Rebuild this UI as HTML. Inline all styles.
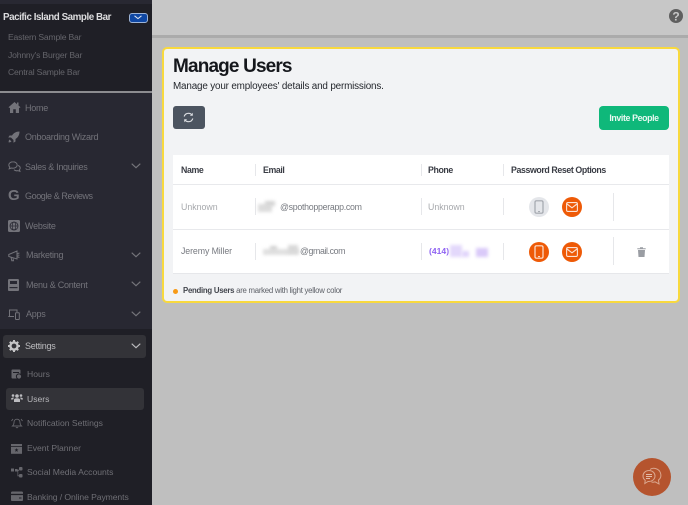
<!DOCTYPE html>
<html>
<head>
<meta charset="utf-8">
<style>
html,body{margin:0;padding:0;width:688px;height:505px;overflow:hidden;background:#bfbfbf;font-family:"Liberation Sans",sans-serif;}
#wrap{position:absolute;left:0;top:0;width:688px;height:505px;overflow:hidden;background:#bfbfbf;filter:blur(.3px);}
.a{position:absolute;white-space:nowrap;}
#side{position:absolute;left:0;top:0;width:152px;height:505px;background:#282832;overflow:hidden;}
.m{position:absolute;font-size:9px;color:#73737a;white-space:nowrap;line-height:12px;letter-spacing:-.25px;}
.s{position:absolute;font-size:8.6px;color:#6f6f75;white-space:nowrap;line-height:12px;}
svg{position:absolute;overflow:visible;}
.div{position:absolute;width:1px;background:#e6e7ea;}
.th{position:absolute;font-size:8.8px;font-weight:bold;color:#3a3d45;white-space:nowrap;line-height:12px;letter-spacing:-.4px;}
.td{position:absolute;font-size:8.8px;color:#777a80;white-space:nowrap;line-height:12px;}
.c{position:absolute;width:20px;height:20px;border-radius:50%;background:#ee5a07;}
.blur{position:absolute;filter:blur(1.5px);}
</style>
</head>
<body>
<div id="wrap">
<!-- top bar -->
<div class="a" style="left:152px;top:0;width:536px;height:35px;background:#c7c7c7;"></div>
<div class="a" style="left:152px;top:35px;width:536px;height:3px;background:#ababab;"></div>
<svg style="left:669px;top:9px" width="14" height="14" viewBox="0 0 14 14"><circle cx="7" cy="7" r="7" fill="#5f5f5f"/><text x="7" y="11.300" text-anchor="middle" font-size="12" font-weight="bold" fill="#c7c7c7" font-family="Liberation Sans">?</text></svg>

<!-- sidebar -->
<div id="side">
  <div class="a" style="left:0;top:4px;width:152px;height:87px;background:#1f1f26;"></div>
  <div class="a" style="left:0;top:91px;width:152px;height:2px;background:#8c8c90;"></div>
  <div class="a" style="left:3px;top:12px;font-size:9.800px;font-weight:bold;color:#dcdcde;line-height:12px;letter-spacing:-.45px;">Pacific Island Sample Bar</div>
  <div class="a" style="left:129px;top:13px;width:17px;height:8px;border:1px solid #9db4d8;border-radius:3px;background:#0f47a3;"></div>
  <svg style="left:133px;top:15px" width="10" height="5" viewBox="0 0 10 5"><path d="M1.500 .8 5 3.600 8.500 .8" fill="none" stroke="#dfe6f2" stroke-width="1"/></svg>
  <div class="s" style="left:8px;top:31px;color:#65656b;letter-spacing:-.2px;">Eastern Sample Bar</div>
  <div class="s" style="left:8px;top:49px;color:#65656b;letter-spacing:-.18px;">Johnny's Burger Bar</div>
  <div class="s" style="left:8px;top:66px;color:#65656b;letter-spacing:-.18px;">Central Sample Bar</div>

  <!-- home -->
  <svg style="left:8px;top:101px" width="13" height="12" viewBox="0 0 13 12"><path d="M6.500 1 .5 6.300 1.500 7 2 6.600V12H5.200V8.200H7.800V12H11V6.600L11.500 7 12.500 6.300 10.500 4.500V1.500H9V3.200Z" fill="#73737a"/></svg>
  <div class="m" style="left:25px;top:102px;">Home</div>
  <!-- rocket -->
  <svg style="left:8px;top:131px" width="12" height="12" viewBox="0 0 12 12"><path d="M11.500 .5C8 .5 5.500 2 4 4.500H1.500L.3 6.500H3L5.500 9V11.700L7.500 10.500V8C10 6.500 11.500 4 11.500 .5ZM1.500 8.500C.8 9.300.6 10.500.6 11.400 1.500 11.400 2.700 11.200 3.500 10.500Z" fill="#73737a"/></svg>
  <div class="m" style="left:25px;top:131px;">Onboarding Wizard</div>
  <!-- sales -->
  <svg style="left:8px;top:161px" width="13" height="11" viewBox="0 0 13 11"><path d="M5 .8C2.600 .8.8 2.200.8 4 .8 4.800 1.200 5.600 1.800 6.100L1.200 7.800 3.400 7C3.900 7.100 4.500 7.200 5 7.200 7.400 7.200 9.200 5.800 9.200 4S7.400 .8 5 .8ZM10 4.500C11.300 4.900 12.200 5.900 12.200 7 12.200 7.700 11.900 8.300 11.400 8.800L11.900 10.300 10 9.600C8.600 10 7 9.700 6 8.800" fill="none" stroke="#73737a" stroke-width="1"/></svg>
  <div class="m" style="left:25px;top:161px;letter-spacing:-.3px;">Sales &amp; Inquiries</div>
  <!-- google -->
  <div class="a" style="left:8px;top:188px;font-size:15px;font-weight:bold;color:#73737a;line-height:16px;">G</div>
  <div class="m" style="left:25px;top:190px;letter-spacing:-.4px;">Google &amp; Reviews</div>
  <!-- website -->
  <svg style="left:8px;top:220px" width="12" height="12" viewBox="0 0 12 12"><rect width="12" height="12" rx="1.500" fill="#73737a"/><circle cx="6" cy="6" r="4" fill="none" stroke="#282832" stroke-width=".8"/><ellipse cx="6" cy="6" rx="1.800" ry="4" fill="none" stroke="#282832" stroke-width=".7"/><path d="M2 6H10" stroke="#282832" stroke-width=".7"/></svg>
  <div class="m" style="left:25px;top:220px;">Website</div>
  <!-- marketing -->
  <svg style="left:8px;top:250px" width="12" height="12" viewBox="0 0 12 12"><path d="M.8 4.500 9 1V9L.8 6.500ZM3 7 3.800 10.800H5.500L4.800 7.600M9 3.800 11.400 3M9 5 11.400 5.300M9 6.500 11.400 7.500" fill="none" stroke="#73737a" stroke-width="1"/></svg>
  <div class="m" style="left:26px;top:249px;">Marketing</div>
  <!-- menu -->
  <svg style="left:8px;top:279px" width="11" height="12" viewBox="0 0 11 12"><rect width="11" height="12" rx="1.300" fill="#73737a"/><rect x="2" y="2" width="7" height="3" fill="#282832"/><rect x="1.500" y="8" width="8" height="1.200" fill="#282832"/></svg>
  <div class="m" style="left:26px;top:279px;">Menu &amp; Content</div>
  <!-- apps -->
  <svg style="left:8px;top:309px" width="12" height="11" viewBox="0 0 12 11"><path d="M1.500 7.500V1H9V3M.3 7.500H6" fill="none" stroke="#73737a" stroke-width="1"/><rect x="7.500" y="3.800" width="3.800" height="6.700" rx=".6" fill="none" stroke="#73737a" stroke-width="1"/></svg>
  <div class="m" style="left:26px;top:308px;">Apps</div>

  <!-- chevrons -->
  <svg style="left:131px;top:163px" width="10" height="6" viewBox="0 0 10 6"><path d="M.7 .7 5 4.700 9.300 .7" fill="none" stroke="#75757b" stroke-width="1.100"/></svg>
  <svg style="left:131px;top:252px" width="10" height="6" viewBox="0 0 10 6"><path d="M.7 .7 5 4.700 9.300 .7" fill="none" stroke="#75757b" stroke-width="1.100"/></svg>
  <svg style="left:131px;top:281px" width="10" height="6" viewBox="0 0 10 6"><path d="M.7 .7 5 4.700 9.300 .7" fill="none" stroke="#75757b" stroke-width="1.100"/></svg>
  <svg style="left:131px;top:311px" width="10" height="6" viewBox="0 0 10 6"><path d="M.7 .7 5 4.700 9.300 .7" fill="none" stroke="#75757b" stroke-width="1.100"/></svg>

  <!-- settings section -->
  <div class="a" style="left:0;top:329px;width:152px;height:176px;background:#1f1f26;"></div>
  <div class="a" style="left:3px;top:335px;width:143px;height:23px;border-radius:3px;background:#333338;"></div>
  <svg style="left:8px;top:340px" width="12" height="12" viewBox="0 0 12 12"><circle cx="6" cy="6" r="3.600" fill="none" stroke="#c4c4c6" stroke-width="2.400"/><path d="M6 0V2.500M6 9.500V12M0 6H2.500M9.500 6H12M1.800 1.800 3.500 3.500M8.500 8.500 10.200 10.200M1.800 10.200 3.500 8.500M8.500 3.500 10.200 1.800" stroke="#c4c4c6" stroke-width="2"/></svg>
  <div class="m" style="left:25px;top:340px;color:#bcbcbf;">Settings</div>
  <svg style="left:131px;top:343px" width="10" height="6" viewBox="0 0 10 6"><path d="M.7 .7 5 4.700 9.300 .7" fill="none" stroke="#bcbcbf" stroke-width="1.100"/></svg>

  <div class="a" style="left:6px;top:388px;width:138px;height:22px;border-radius:3px;background:#333338;"></div>

  <svg style="left:11px;top:368px" width="11" height="12" viewBox="0 0 11 12"><rect x=".5" y="1.500" width="9" height="9" rx="1" fill="#66666c"/><rect x="2" y="4" width="6" height="1" fill="#1f1f26"/><circle cx="8" cy="8.500" r="2.600" fill="#66666c" stroke="#1f1f26"/></svg>
  <div class="s" style="left:27px;top:368px;">Hours</div>

  <svg style="left:11px;top:393px" width="12" height="10" viewBox="0 0 12 10"><g fill="#bcbcbf"><circle cx="6" cy="3" r="1.800"/><circle cx="2" cy="2.500" r="1.300"/><circle cx="10" cy="2.500" r="1.300"/><path d="M3 9V6.800C3 5.800 4 5.200 6 5.200S9 5.800 9 6.800V9ZM0 6.500C0 5 1 4.500 2.800 4.500L2.200 6.500ZM12 6.500C12 5 11 4.500 9.200 4.500L9.800 6.500Z"/></g></svg>
  <div class="s" style="left:27px;top:393px;color:#b6b6b9;">Users</div>

  <svg style="left:11px;top:418px" width="12" height="11" viewBox="0 0 12 11"><path d="M6 1.200C4 1.200 3 2.700 3 4.500 3 6.500 2.300 7.300 1.500 8H10.500C9.700 7.300 9 6.500 9 4.500 9 2.700 8 1.200 6 1.200ZM5 9.200C5.300 10 6.700 10 7 9.200M.5 3 2 1M11.500 3 10 1" fill="none" stroke="#66666c" stroke-width=".9"/></svg>
  <div class="s" style="left:27px;top:417px;">Notification Settings</div>

  <svg style="left:11px;top:443px" width="11" height="11" viewBox="0 0 11 11"><path d="M0 1H11V3H0Z" fill="#66666c"/><rect x="0" y="3.800" width="11" height="7" fill="#66666c"/><path d="M5.500 5 6 6.400 7.500 6.500 6.300 7.400 6.800 8.900 5.500 8 4.200 8.900 4.700 7.400 3.500 6.500 5 6.400Z" fill="#1f1f26"/></svg>
  <div class="s" style="left:27px;top:442px;">Event Planner</div>

  <svg style="left:11px;top:467px" width="12" height="11" viewBox="0 0 12 11"><g fill="#66666c"><rect x="0" y="1.500" width="3" height="3"/><rect x="4" y="2" width="2.500" height="2.500"/><rect x="8" y="0" width="3.500" height="3.500" rx="1"/><rect x="8" y="7" width="3.500" height="3.500" rx="1"/><path d="M6.500 2.800H8V3.800H7.200V8.400H8V9.200H6.500Z"/></g></svg>
  <div class="s" style="left:27px;top:466px;">Social Media Accounts</div>

  <svg style="left:11px;top:491px" width="12" height="11" viewBox="0 0 12 11"><rect y=".5" width="12" height="9.500" rx="1.300" fill="#66666c"/><rect y="2.800" width="12" height="1.300" fill="#1f1f26"/><rect x="8" y="6.500" width="2.500" height="1" fill="#1f1f26"/></svg>
  <div class="s" style="left:27px;top:491px;letter-spacing:-.08px;">Banking / Online Payments</div>
</div>

<!-- card -->
<div class="a" style="left:162px;top:47px;width:518px;height:256px;box-sizing:border-box;border:2px solid #f8d93e;border-radius:5px;background:#f2f3f5;"></div>
<div class="a" style="left:173px;top:55px;font-size:19px;font-weight:bold;color:#15171c;line-height:24px;letter-spacing:-.85px;">Manage Users</div>
<div class="a" style="left:173px;top:80px;font-size:9.900px;color:#24272d;line-height:13px;letter-spacing:-.17px;">Manage your employees' details and permissions.</div>

<div class="a" style="left:173px;top:106px;width:32px;height:23px;border-radius:3px;background:#4c5460;"></div>
<svg style="left:183px;top:112px" width="11" height="11" viewBox="0 0 11 11"><path d="M1.200 4.500C1.800 2.500 3.400 1.300 5.500 1.300 7 1.300 8.300 2 9 3.200M9.800 6.500C9.200 8.500 7.600 9.700 5.500 9.700 4 9.700 2.700 9 2 7.800" fill="none" stroke="#dcdee2" stroke-width="1.200"/><path d="M9.800 .8V3.800H6.900ZM1.200 10.200V7.200H4.100Z" fill="#dcdee2"/></svg>

<div class="a" style="left:599px;top:106px;width:70px;height:24px;border-radius:4px;background:#0fb87a;color:#e8f8f1;font-size:8.800px;font-weight:bold;line-height:24px;text-align:center;letter-spacing:-.38px;">Invite People</div>

<!-- table -->
<div class="a" style="left:173px;top:155px;width:496px;height:118px;background:#fff;"></div>
<div class="a" style="left:173px;top:184px;width:496px;height:1px;background:#e8e9ec;"></div>
<div class="a" style="left:173px;top:229px;width:496px;height:1px;background:#e8e9ec;"></div>
<div class="a" style="left:173px;top:273px;width:496px;height:1px;background:#e6e7ea;"></div>

<div class="div" style="left:255px;top:164px;height:12px;"></div>
<div class="div" style="left:421px;top:164px;height:12px;"></div>
<div class="div" style="left:503px;top:164px;height:12px;"></div>
<div class="div" style="left:255px;top:198px;height:17px;"></div>
<div class="div" style="left:421px;top:198px;height:17px;"></div>
<div class="div" style="left:503px;top:198px;height:17px;"></div>
<div class="div" style="left:613px;top:193px;height:28px;"></div>
<div class="div" style="left:255px;top:243px;height:17px;"></div>
<div class="div" style="left:421px;top:243px;height:17px;"></div>
<div class="div" style="left:503px;top:243px;height:17px;"></div>
<div class="div" style="left:613px;top:237px;height:28px;"></div>

<div class="th" style="left:181px;top:164px;">Name</div>
<div class="th" style="left:263px;top:164px;">Email</div>
<div class="th" style="left:428px;top:164px;">Phone</div>
<div class="th" style="left:511px;top:164px;">Password Reset Options</div>

<div class="td" style="left:181px;top:201px;color:#a6a8ac;">Unknown</div>
<div class="blur" style="left:258px;top:204px;width:14px;height:8px;background:#dcdcdc;"></div>
<div class="blur" style="left:265px;top:201px;width:10px;height:5px;background:#d4d4d4;"></div>
<div class="td" style="left:280px;top:201px;letter-spacing:-.28px;">@spothopperapp.com</div>
<div class="td" style="left:428px;top:201px;color:#a6a8ac;">Unknown</div>

<div class="td" style="left:181px;top:245px;letter-spacing:-.1px;">Jeremy Miller</div>
<div class="blur" style="left:263px;top:249px;width:36px;height:6px;background:#e0e0e0;"></div>
<div class="blur" style="left:270px;top:246px;width:7px;height:4px;background:#d0d0d0;"></div>
<div class="blur" style="left:288px;top:245px;width:10px;height:8px;background:#d8d8d8;"></div>
<div class="td" style="left:300px;top:245px;letter-spacing:-.4px;">@gmail.com</div>
<div class="td" style="left:429px;top:245px;color:#8f63f2;font-weight:bold;font-size:8.600px;">(414)</div>
<div class="blur" style="left:450px;top:245px;width:12px;height:12px;background:#e3d8fb;"></div>
<div class="blur" style="left:462px;top:251px;width:7px;height:6px;background:#e0d3fb;"></div>
<div class="blur" style="left:476px;top:248px;width:12px;height:9px;background:#d9c9f9;"></div>

<!-- row 1 icons -->
<div class="c" style="left:529px;top:197px;background:#e4e6ea;"></div>
<svg style="left:534px;top:200px" width="10" height="14" viewBox="0 0 10 14"><rect x="1" y=".8" width="8" height="12.400" rx="1.400" fill="none" stroke="#a2a6ad" stroke-width="1.200"/><path d="M4 11.600H6" stroke="#a2a6ad"/></svg>
<div class="c" style="left:562px;top:197px;"></div>
<svg style="left:566px;top:202px" width="12" height="10" viewBox="0 0 12 10"><rect x=".6" y=".6" width="10.800" height="8.800" rx="1.300" fill="none" stroke="#fbe3d5" stroke-width="1.100"/><path d="M1 2 6 5.800 11 2" fill="none" stroke="#fbe3d5" stroke-width="1.100"/></svg>

<!-- row 2 icons -->
<div class="c" style="left:529px;top:242px;"></div>
<svg style="left:534px;top:245px" width="10" height="14" viewBox="0 0 10 14"><rect x="1" y=".8" width="8" height="12.400" rx="1.400" fill="none" stroke="#fbe3d5" stroke-width="1.200"/><path d="M4 11.600H6" stroke="#fbe3d5"/></svg>
<div class="c" style="left:562px;top:242px;"></div>
<svg style="left:566px;top:247px" width="12" height="10" viewBox="0 0 12 10"><rect x=".6" y=".6" width="10.800" height="8.800" rx="1.300" fill="none" stroke="#fbe3d5" stroke-width="1.100"/><path d="M1 2 6 5.800 11 2" fill="none" stroke="#fbe3d5" stroke-width="1.100"/></svg>
<svg style="left:637px;top:247px" width="9" height="10" viewBox="0 0 9 10"><path d="M.3 1.200H3V.3H6V1.200H8.700V2.200H.3ZM1 3H8L7.500 10H1.500Z" fill="#9a9da3"/></svg>

<!-- legend -->
<div class="a" style="left:173px;top:289px;width:5px;height:5px;border-radius:50%;background:#f79a16;"></div>
<div class="a" style="left:183px;top:285px;font-size:7.800px;color:#5c5f66;line-height:12px;letter-spacing:-.26px;"><b style="color:#43464d;">Pending Users</b> are marked with light yellow color</div>

<!-- chat bubble -->
<div class="a" style="left:633px;top:458px;width:38px;height:38px;border-radius:50%;background:#b5542e;"></div>
<svg style="left:641px;top:466px" width="22" height="22" viewBox="0 0 22 22"><path d="M8 4.500C4.500 4.500 2 7 2 10 2 11.800 2.900 13.300 4.200 14.300L3.800 17.500 7 15.500C10.500 15.900 14 13.500 14 10 14 7 11.500 4.500 8 4.500Z" fill="none" stroke="#dba78f" stroke-width="1"/><path d="M9 3.500C12 1 18 2.500 19.500 7 20.500 10 19.500 12.500 17.500 14L18 18 14 15.800C12.800 16.300 11.500 16.300 10.500 16" fill="none" stroke="#dba78f" stroke-width="1"/><path d="M5 8.500H11M5 10.500H11M5 12.500H9" stroke="#e3bba8" stroke-width="1"/></svg>
</div>
</body>
</html>
